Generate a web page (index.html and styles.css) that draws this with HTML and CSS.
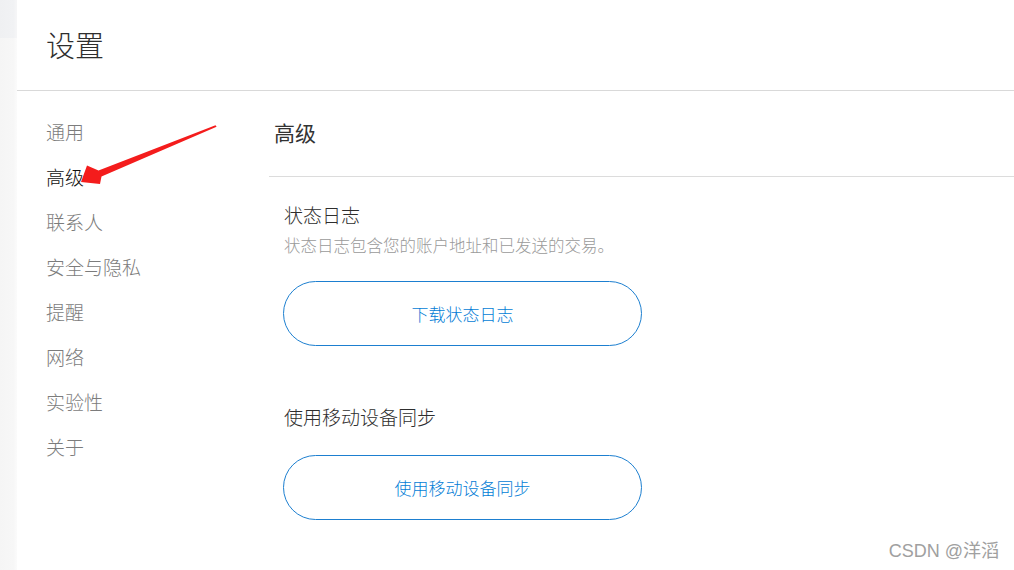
FILE: index.html
```html
<!DOCTYPE html>
<html lang="zh-CN">
<head>
<meta charset="utf-8">
<title>设置</title>
<link rel="stylesheet" href="styles.css">
</head>
<body>
<div class="page">
  <div class="strip">
    <div class="strip-top"></div>
    <div class="strip-rest"></div>
  </div>
  <div class="panel">
    <div class="header"><h1 class="title">设置</h1></div>
    <div class="body">
      <nav class="sidebar">
        <div class="nav-item">通用</div>
        <div class="nav-item active">高级</div>
        <div class="nav-item">联系人</div>
        <div class="nav-item">安全与隐私</div>
        <div class="nav-item">提醒</div>
        <div class="nav-item">网络</div>
        <div class="nav-item">实验性</div>
        <div class="nav-item">关于</div>
      </nav>
      <main class="content">
        <div class="content-head"><h2 class="content-title">高级</h2></div>
        <section class="section">
          <div class="sec-title">状态日志</div>
          <div class="sec-desc">状态日志包含您的账户地址和已发送的交易。</div>
          <button class="btn">下载状态日志</button>
        </section>
        <section class="section second">
          <div class="sec-title">使用移动设备同步</div>
          <button class="btn">使用移动设备同步</button>
        </section>
      </main>
    </div>
  </div>
</div>
<svg class="arrow" width="1014" height="570" viewBox="0 0 1014 570">
  <polygon fill="#f41c1c" points="81,182 87,165.5 98.5,170.5 215.5,125.3 216.6,126.8 101.5,176.5 100,184"/>
</svg>
<div class="watermark">CSDN @洋滔</div>
</body>
</html>
```

FILE: styles.css
```css
html, body {
  margin: 0;
  padding: 0;
  width: 1014px;
  height: 570px;
  overflow: hidden;
  background: #fff;
  font-family: "Noto Sans CJK SC", "Noto Sans", sans-serif;
  font-weight: 300;
}

.page {
  display: flex;
  height: 570px;
}

.strip {
  width: 17px;
  display: flex;
  flex-direction: column;
  flex-shrink: 0;
}

.strip-top {
  height: 38px;
  background: linear-gradient(to right, #eff0f2 0%, #f1f2f4 80%, #f6f6f7 100%);
}

.strip-rest {
  flex: 1;
  background: linear-gradient(to right, #f5f5f5 0%, #f7f7f7 80%, #fbfbfb 100%);
}

.panel {
  flex: 1;
  display: flex;
  flex-direction: column;
  background: #fff;
}

.header {
  height: 90px;
  border-bottom: 1px solid #d9d9d9;
  display: flex;
  align-items: center;
  padding-left: 29px;
}

.title {
  margin: 0;
  font-size: 29px;
  font-weight: 300;
  color: #2e2e2e;
  line-height: 40px;
  padding-bottom: 2px;
}

.body {
  display: flex;
  flex: 1;
}

.sidebar {
  width: 223px;
  padding-left: 29px;
  padding-top: 18px;
  flex-shrink: 0;
}

.nav-item {
  height: 45px;
  line-height: 45px;
  font-size: 19px;
  color: #7c7c7c;
}

.nav-item.active {
  color: #111;
}

.content {
  flex: 1;
}

.content-head {
  height: 85px;
  border-bottom: 1px solid #dcdcdc;
  display: flex;
  align-items: center;
  padding-left: 5px;
}

.content-title {
  margin: 0;
  font-size: 21px;
  font-weight: 400;
  color: #333;
  line-height: 30px;
  padding-bottom: 4px;
}

.section {
  padding-left: 14px;
  padding-top: 25px;
  display: flex;
  flex-direction: column;
  align-items: flex-start;
}

.section.second {
  padding-top: 58px;
}

.sec-title {
  font-size: 19px;
  line-height: 26px;
  color: #2e2e2e;
  padding-left: 1px;
}

.sec-desc {
  margin-top: 5px;
  font-size: 16.5px;
  line-height: 24px;
  color: #9a9a9a;
  padding-left: 1px;
}

.btn {
  margin-top: 24px;
  width: 359px;
  height: 65px;
  border: 1px solid #1d7fd0;
  border-radius: 33px;
  background: #fff;
  color: #037dd6;
  font-family: "Noto Sans CJK SC", "Noto Sans", sans-serif;
  font-weight: 300;
  font-size: 17px;
  padding: 0;
}

.section.second .btn {
  margin-top: 25px;
}

.arrow {
  position: absolute;
  left: 0;
  top: 0;
  pointer-events: none;
}

.watermark {
  position: absolute;
  right: 15px;
  bottom: 7px;
  font-family: "Liberation Sans", "Noto Sans CJK SC", sans-serif;
  font-weight: 400;
  font-size: 18px;
  line-height: 24px;
  color: #a0a0a0;
}
```
